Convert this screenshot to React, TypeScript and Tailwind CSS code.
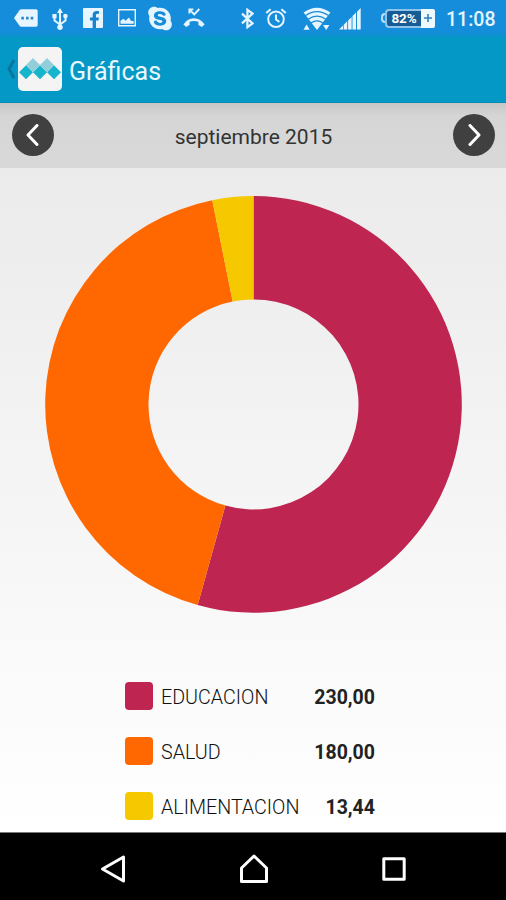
import React from "react";
import { FaFacebookF, FaSkype } from "react-icons/fa";

interface Category {
  name: string;
  amount: number;
  label: string;
  color: string;
}

const categories: Category[] = [
  { name: "EDUCACION", amount: 230, label: "230,00", color: "#bf2551" },
  { name: "SALUD", amount: 180, label: "180,00", color: "#ff6700" },
  { name: "ALIMENTACION", amount: 13.44, label: "13,44", color: "#f5c800" },
];

const OUTER = 208.3;
const INNER = 105;

const point = (radius: number, angle: number) =>
  `${radius * Math.sin(angle)} ${-radius * Math.cos(angle)}`;

const slicePath = (start: number, end: number) => {
  const large = end - start > Math.PI ? 1 : 0;
  return `M ${point(OUTER, start)} A ${OUTER} ${OUTER} 0 ${large} 1 ${point(OUTER, end)} L ${point(INNER, end)} A ${INNER} ${INNER} 0 ${large} 0 ${point(INNER, start)} Z`;
};

const DonutChart = ({ data }: { data: Category[] }) => {
  const total = data.reduce((sum, item) => sum + item.amount, 0);
  let angle = 0;
  return (
    <svg width="418" height="418" viewBox="-209.5 -209.4 418 418" className="block">
      {data.map((item) => {
        const start = angle;
        angle += (item.amount / total) * Math.PI * 2;
        return (
          <path key={item.name} d={slicePath(start, angle)} fill={item.color} />
        );
      })}
    </svg>
  );
};

const StatusBar = () => (
  <div className="flex h-9 items-center justify-between bg-gradient-to-b from-[#158ddb] from-80% to-[#0f8fd3] pr-[11px] pl-3.5 text-[#e6f5ff]">
    <div className="flex items-center">
      {/* messages */}
      <svg width="24" height="18" viewBox="0 0 24 18">
        <path d="M0 9 5.5 1.2Q6.2 .3 7.5 .3H22Q23.7 .3 23.7 2V16Q23.7 17.7 22 17.7H7.5Q6.2 17.7 5.5 16.8Z" fill="currentColor" />
        <path d="M7.3 7.8h2.6v2.6H7.3zM12 7.8h2.6v2.6H12zM16.7 7.8h2.6v2.6h-2.6z" fill="#2d86c6" />
      </svg>
      {/* usb */}
      <svg width="16" height="23" viewBox="0 0 16 23" className="mt-0.5 ml-3.5">
        <path d="M8 4v15M2.5 8v4.5L8 16.5l5.5-4V8" fill="none" stroke="currentColor" strokeWidth="2" />
        <path d="M8 0l3 5H5zM.4 6h4.2v4.2H.4z" fill="currentColor" />
        <circle cx="13.4" cy="8" r="2.3" fill="currentColor" />
        <circle cx="8" cy="19.3" r="2.7" fill="currentColor" />
      </svg>
      <div className="ml-[15px] flex h-5 w-5 items-end justify-end rounded-[1px] bg-[#e6f5ff] pr-[3px]">
        <FaFacebookF className="h-[17px] w-[11px] text-[#1783cc]" />
      </div>
      {/* screenshot */}
      <svg width="18" height="18" viewBox="0 0 18 18" className="ml-[15px]">
        <path d="M.7 .7h16.6v16.1H.7z" fill="none" stroke="currentColor" strokeWidth="1.4" />
        <path d="M2.5 14.8v-3l3-2 2 2 3.5-3.4 2 3.6h2.6v2.8z" fill="currentColor" />
      </svg>
      <FaSkype className="ml-[11px] h-[27px] w-[26px]" />
      {/* missed call */}
      <svg width="22" height="20" viewBox="0 0 22 20" className="ml-[10px]">
        <path d="M6.4 5.5V1.4h4M6.8 1.8l4.4 4.6L16.3 1" fill="none" stroke="currentColor" strokeWidth="1.9" />
        <path d="M.4 16.4Q4.7 10.2 11 10.2T21.6 16.4L18.7 19Q16.8 17.7 15.4 17.1V13.8Q11 12.4 6.6 13.8V17.1Q5.2 17.7 3.3 19Z" fill="currentColor" />
      </svg>
    </div>
    <div className="flex items-center">
      {/* bluetooth */}
      <svg width="13" height="21" viewBox="0 0 13 21">
        <path d="M1 5.6l10.5 9.8L6.4 19.2V1.8l5.1 3.8L1 15.4" fill="none" stroke="currentColor" strokeWidth="2.2" />
      </svg>
      {/* alarm */}
      <svg width="22" height="21" viewBox="0 0 22 21" className="ml-[11px]">
        <circle cx="11" cy="11.3" r="7.8" fill="none" stroke="currentColor" strokeWidth="2" />
        <path d="M11 6.5v5l3.4 2.3M1.2 5 5.6 1.3M20.8 5l-4.4-3.7" fill="none" stroke="currentColor" strokeWidth="2" />
      </svg>
      {/* wifi */}
      <svg width="28" height="24" viewBox="0 0 28 24" className="mt-0.5 ml-4">
        <path d="M.6 5.4Q14-4 27.4 5.4L14 23Z" fill="currentColor" />
        <path d="M2.5 8.6Q14 .6 25.5 8.6M5.2 12.2Q14 6.2 22.8 12.2M8 16Q14 11.9 20 16" fill="none" stroke="#168bd7" strokeWidth="1.2" />
        <path d="M.5 22.8 3.6 17.6 6.7 22.8ZM20 18h6.4l-3.2 5Z" fill="currentColor" />
      </svg>
      {/* signal */}
      <svg width="22" height="22" viewBox="0 0 22 22" className="mt-0.5 ml-2">
        <path d="M0 21.5 4 17.5v4ZM4.7 16.8l3.5-3.5v8.2H4.7ZM9.1 12.4l3.5-3.5v12.6H9.1ZM13.5 8l3.5-3.5v17h-3.5ZM18 3.7 21.7 0v21.5H18Z" fill="currentColor" />
      </svg>
      {/* battery */}
      <div className="ml-5 flex items-center">
        <div className="h-2.5 w-1 rounded-l border-2 border-r-0 border-[#b9dcf6]" />
        <div className="flex h-[19px] w-[36px] items-center justify-center rounded-l border-2 border-r-0 border-[#8fc3ea] bg-[#175c94] text-[13.5px] font-bold tracking-[-0.2px] text-white">
          82%
        </div>
        <div className="flex h-[19px] w-3.5 items-center justify-center rounded-r-[2px] bg-[#eef8ff]">
          <svg width="8" height="8" viewBox="0 0 8 8">
            <path d="M4 0v8M0 4h8" stroke="#2e7fc0" strokeWidth="1.6" />
          </svg>
        </div>
      </div>
      <span className="mt-[3px] ml-[11px] w-[49px] text-[19.5px] leading-none font-medium whitespace-nowrap">
        11:08
      </span>
    </div>
  </div>
);

const AppHeader = () => (
  <div className="flex h-[67px] items-center border-b border-[#078bb5] bg-[#0498c6] pl-[7px]">
    <svg width="8" height="20" viewBox="0 0 8 20">
      <path d="M7 1 2 10l5 9" fill="none" stroke="#08749d" strokeWidth="3" />
    </svg>
    <div className="ml-[3px] flex h-[44px] w-[44px] items-center justify-center rounded-[5px] bg-[#f4f4f4]">
      <svg width="42" height="22" viewBox="0 0 42 22" className="shrink-0">
        <path d="M14 0l7 7-7 7-7-7ZM28 0l7 7-7 7-7-7Z" fill="#93cfdb" />
        <path d="M7 7.2l7 7-7 7-7-7ZM21 7.2l7 7-7 7-7-7ZM35 7.2l7 7-7 7-7-7Z" fill="#17b5cb" />
      </svg>
    </div>
    <h1 className="mt-1 ml-[7px] text-[25px] leading-none text-[#e9f8fd]">Gráficas</h1>
  </div>
);

const RoundArrow = ({ d }: { d: string }) => (
  <button className="mb-px flex h-[42px] w-[42px] items-center justify-center rounded-full bg-[#404040]">
    <svg width="14" height="22" viewBox="0 0 14 22">
      <path d={d} fill="none" stroke="#fff" strokeWidth="3" strokeLinecap="round" strokeLinejoin="round" />
    </svg>
  </button>
);

const MonthPicker = () => (
  <div className="flex h-[65px] items-center justify-between bg-gradient-to-b from-[#c6c6c6] via-[#d5d5d5] via-20% to-[#d9d9d9] pr-[11px] pl-3">
    <RoundArrow d="M11 1.5 2 11l9 9.5" />
    <span className="mt-[3px] text-[21px] leading-none text-[#333]">septiembre 2015</span>
    <RoundArrow d="M3 1.5 12 11l-9 9.5" />
  </div>
);

const Legend = ({ data }: { data: Category[] }) => (
  <div className="mt-[69px] ml-[125px] flex w-[250px] flex-col gap-[27px]">
    {data.map((item) => (
      <div key={item.name} className="flex h-7 items-center">
        <div
          className="h-7 w-7 rounded-[4px]"
          style={{ backgroundColor: item.color }}
        />
        <span className="mt-1 ml-2 text-[19.7px] font-light text-[#111]">{item.name}</span>
        <span className="mt-1 ml-auto text-[19.5px] font-bold text-[#222]">{item.label}</span>
      </div>
    ))}
  </div>
);

const NavigationBar = () => (
  <div className="flex h-[68px] items-center justify-between border-t border-[#777] bg-black pt-1 pr-[99px] pl-[100px]">
    <svg width="26" height="30" viewBox="0 0 26 30">
      <path d="M23.5 3v24L2.5 15Z" fill="none" stroke="#fff" strokeWidth="3" strokeLinejoin="round" />
    </svg>
    <svg width="30" height="30" viewBox="0 0 30 30">
      <path d="M15 2 27.5 14v13.5h-25V14Z" fill="none" stroke="#fff" strokeWidth="3" strokeLinejoin="round" />
    </svg>
    <svg width="26" height="26" viewBox="0 0 26 26">
      <path d="M2.8 2.8h20.4v20.4H2.8z" fill="none" stroke="#fff" strokeWidth="3" strokeLinejoin="round" />
    </svg>
  </div>
);

const App = () => {
  return (
    <div className="flex h-[900px] w-[506px] flex-col overflow-hidden font-[Roboto,sans-serif]">
      <StatusBar />
      <AppHeader />
      <MonthPicker />
      <div className="flex-1 bg-gradient-to-b from-[#ebebeb] to-white pt-[27px]">
        <div className="flex justify-center">
          <DonutChart data={categories} />
        </div>
        <Legend data={categories} />
      </div>
      <NavigationBar />
    </div>
  );
};

export default App;
